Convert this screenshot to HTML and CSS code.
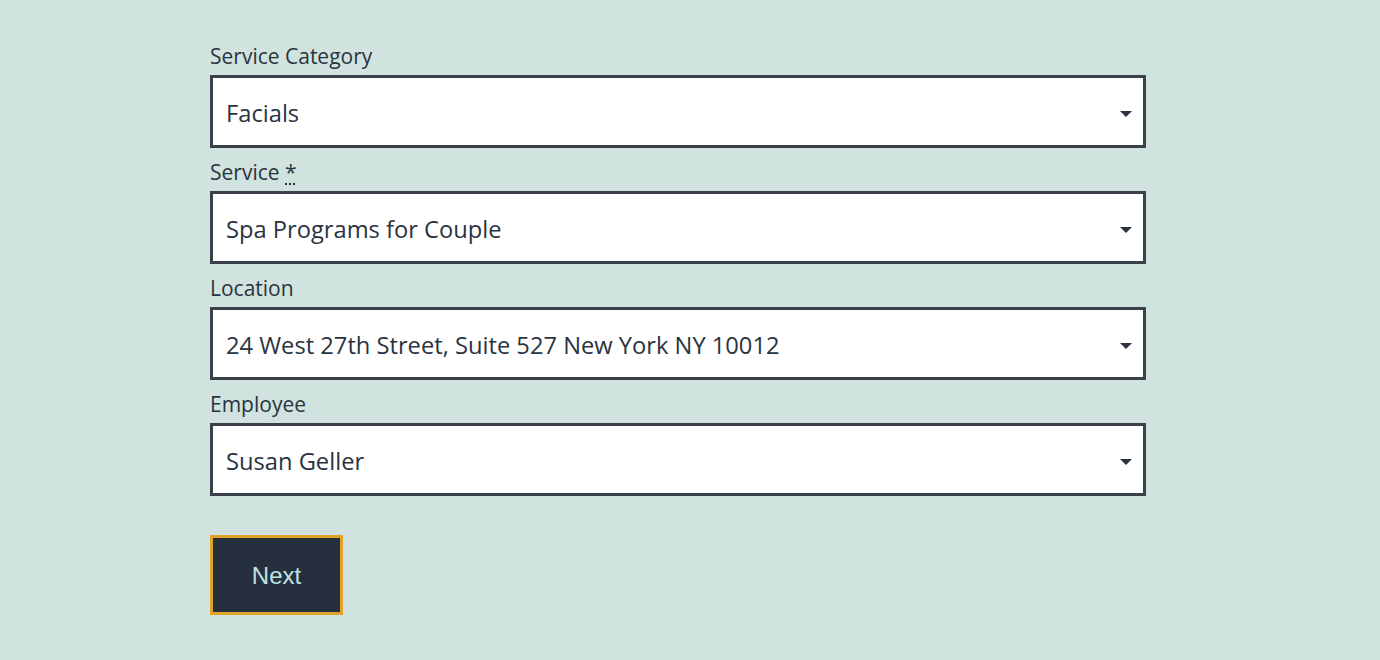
FILE: index.html
```html
<!DOCTYPE html>
<html lang="en">
<head>
  <meta charset="UTF-8">
  <title>Book an appointment</title>
  <link rel="stylesheet" href="styles.css">
</head>
<body>
  <form class="booking">
    <div class="field">
      <label for="category">Service Category</label>
      <div class="select-wrap">
        <select id="category">
          <option>Facials</option>
        </select>
        <svg class="caret" width="12" height="6" viewBox="0 0 12 6"><path d="M0 0h12L6 6z" fill="#2a3340"/></svg>
      </div>
    </div>
    <div class="field">
      <label for="service">Service <abbr title="required">*</abbr></label>
      <div class="select-wrap">
        <select id="service">
          <option>Spa Programs for Couple</option>
        </select>
        <svg class="caret" width="12" height="6" viewBox="0 0 12 6"><path d="M0 0h12L6 6z" fill="#2a3340"/></svg>
      </div>
    </div>
    <div class="field">
      <label for="location">Location</label>
      <div class="select-wrap">
        <select id="location">
          <option>24 West 27th Street, Suite 527 New York NY 10012</option>
        </select>
        <svg class="caret" width="12" height="6" viewBox="0 0 12 6"><path d="M0 0h12L6 6z" fill="#2a3340"/></svg>
      </div>
    </div>
    <div class="field">
      <label for="employee">Employee</label>
      <div class="select-wrap">
        <select id="employee">
          <option>Susan Geller</option>
        </select>
        <svg class="caret" width="12" height="6" viewBox="0 0 12 6"><path d="M0 0h12L6 6z" fill="#2a3340"/></svg>
      </div>
    </div>
    <button type="button" class="next">Next</button>
  </form>
</body>
</html>
```

FILE: styles.css
```css
body {
  margin: 0;
  background-color: #d1e3de;
  font-family: "Open Sans", "Noto Sans", sans-serif;
  color: #2a3340;
}

.booking {
  width: 936px;
  margin-left: 210px;
  padding-top: 42px;
}

.field {
  margin-bottom: 10px;
}

label {
  display: block;
  font-size: 21px;
  line-height: 28px;
  margin-bottom: 5px;
}

abbr {
  text-decoration: underline dotted;
  text-underline-offset: 3px;
}

.select-wrap {
  position: relative;
}

select {
  display: block;
  box-sizing: border-box;
  width: 100%;
  height: 73px;
  padding: 2px 40px 0 13px;
  border: 3px solid #3a4149;
  border-radius: 0;
  background-color: white;
  color: #2a3340;
  font-family: "Open Sans", "Noto Sans", sans-serif;
  font-size: 23.7px;
  appearance: none;
  -webkit-appearance: none;
}

.caret {
  position: absolute;
  right: 14px;
  top: 36px;
  pointer-events: none;
}

.next {
  margin-top: 29px;
  width: 133px;
  height: 80px;
  padding-top: 2px;
  background-color: #262f3d;
  border: 3px solid #e0a526;
  color: #bfe3e3;
  font-family: "Liberation Sans", Arial, sans-serif;
  font-size: 24px;
  cursor: pointer;
}
```
